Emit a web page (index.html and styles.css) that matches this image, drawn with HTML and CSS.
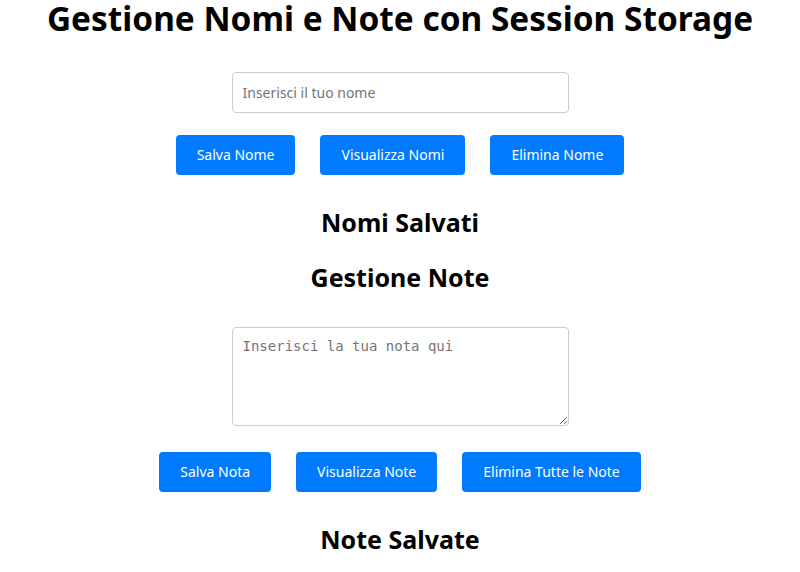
FILE: index.html
```html
<!DOCTYPE html>
<html lang="it">
<head>
<meta charset="utf-8">
<title>Gestione Nomi e Note</title>
<link rel="stylesheet" href="styles.css">
</head>
<body>
<h1 class="title">Gestione Nomi e Note con Session Storage</h1>
<input class="field" type="text" placeholder="Inserisci il tuo nome">
<div class="actions">
  <button class="btn">Salva Nome</button>
  <button class="btn">Visualizza Nomi</button>
  <button class="btn">Elimina Nome</button>
</div>
<h2 class="section section-first">Nomi Salvati</h2>
<ul class="list"></ul>
<h2 class="section section-second">Gestione Note</h2>
<textarea class="note" placeholder="Inserisci la tua nota qui"></textarea>
<div class="actions actions-notes">
  <button class="btn">Salva Nota</button>
  <button class="btn">Visualizza Note</button>
  <button class="btn">Elimina Tutte le Note</button>
</div>
<h2 class="section section-last">Note Salvate</h2>
</body>
</html>
```
FILE: styles.css
```css
html, body {
  margin: 0;
  padding: 0;
  background: #fff;
}
body {
  font-family: "Noto Sans", sans-serif;
  text-align: center;
  color: #000;
}
.title {
  font-size: 33.4px;
  font-weight: 700;
  margin: 0;
  line-height: 36px;
}
.field {
  display: block;
  box-sizing: border-box;
  width: 337px;
  height: 41px;
  margin: 36px auto 0;
  padding: 0 10px;
  border: 1px solid #ccc;
  border-radius: 4px;
  font-family: "Noto Sans", sans-serif;
  font-size: 14px;
}
.field::placeholder { color: #757575; }
.actions {
  display: flex;
  justify-content: center;
  gap: 25px;
  margin-top: 22px;
}
.actions-notes { margin-top: 26px; }
.btn {
  background: #007bff;
  color: #fff;
  border: none;
  border-radius: 4px;
  padding: 0 21px 2px;
  height: 40px;
  font-family: "Noto Sans", sans-serif;
  font-size: 14px;
}
.section {
  font-size: 25px;
  font-weight: 700;
  line-height: 34px;
  margin: 0;
}
.section-first { margin-top: 30px; }
.section-second { margin-top: 21px; }
.section-last { margin-top: 30px; }
.list { margin: 0; padding: 0; }
.note {
  display: block;
  box-sizing: border-box;
  width: 337px;
  height: 99px;
  margin: 33px auto 0;
  padding: 10px;
  border: 1px solid #ccc;
  border-radius: 4px;
  font-family: "DejaVu Sans Mono", monospace;
  font-size: 14px;
}
.note::placeholder { color: #757575; }
```
